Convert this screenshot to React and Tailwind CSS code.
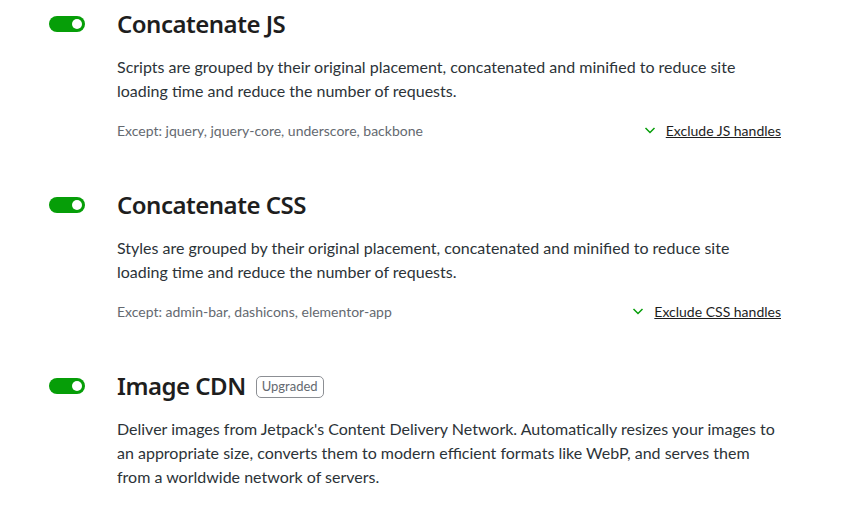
import React from "react";

const sections = [
  {
    title: "Concatenate JS",
    text: "Scripts are grouped by their original placement, concatenated and minified to reduce site loading time and reduce the number of requests.",
    except: "Except: jquery, jquery-core, underscore, backbone",
    link: "Exclude JS handles",
  },
  {
    title: "Concatenate CSS",
    text: "Styles are grouped by their original placement, concatenated and minified to reduce site loading time and reduce the number of requests.",
    except: "Except: admin-bar, dashicons, elementor-app",
    link: "Exclude CSS handles",
  },
  {
    title: "Image CDN",
    badge: "Upgraded",
    text: "Deliver images from Jetpack's Content Delivery Network. Automatically resizes your images to an appropriate size, converts them to modern efficient formats like WebP, and serves them from a worldwide network of servers.",
  },
];

function Toggle() {
  return (
    <div className="w-[36px] h-[16px] rounded-full bg-[#069e08] flex items-center justify-end pr-[3px] mt-[8px] shrink-0">
      <div className="w-[10px] h-[10px] rounded-full bg-white" />
    </div>
  );
}

function Chevron() {
  return (
    <svg width="12" height="12" viewBox="0 0 12 12" fill="none">
      <path d="M1.5 4l4.5 4.5 4.5-4.5" stroke="#069e08" strokeWidth="1.5" />
    </svg>
  );
}

function Section({ title, badge, text, except, link }) {
  return (
    <div className="flex gap-[32px] mb-[49px]">
      <Toggle />
      <div className="w-[664px]">
        <div className="flex items-center gap-[10px] h-[32px]">
          <h2 className="text-[24px] leading-[32px] font-semibold text-[#1e1e1e] font-['Noto_Sans',sans-serif] tracking-[-0.5px]">{title}</h2>
          {badge && (
            <span className="border border-[#8c8f94] rounded-[5px] px-[5px] h-[22px] flex items-center text-[13px] text-[#646970] mt-[1px]">
              {badge}
            </span>
          )}
        </div>
        <p className="mt-[15px] text-[16px] leading-[24px] text-[#2c3338]">{text}</p>
        {except && (
          <div className="mt-[17px] flex justify-between items-center h-[20px]">
            <span className="text-[14px] text-[#646970]">{except}</span>
            <a className="flex items-center gap-[10px] text-[14px] text-[#1e1e1e] underline">
              <Chevron />
              {link}
            </a>
          </div>
        )}
      </div>
    </div>
  );
}

export default function App() {
  return (
    <div className="w-[858px] h-[506px] bg-white overflow-hidden pl-[49px] pt-[8px] font-['Lato',sans-serif]">
      {sections.map((s) => (
        <Section key={s.title} {...s} />
      ))}
    </div>
  );
}
